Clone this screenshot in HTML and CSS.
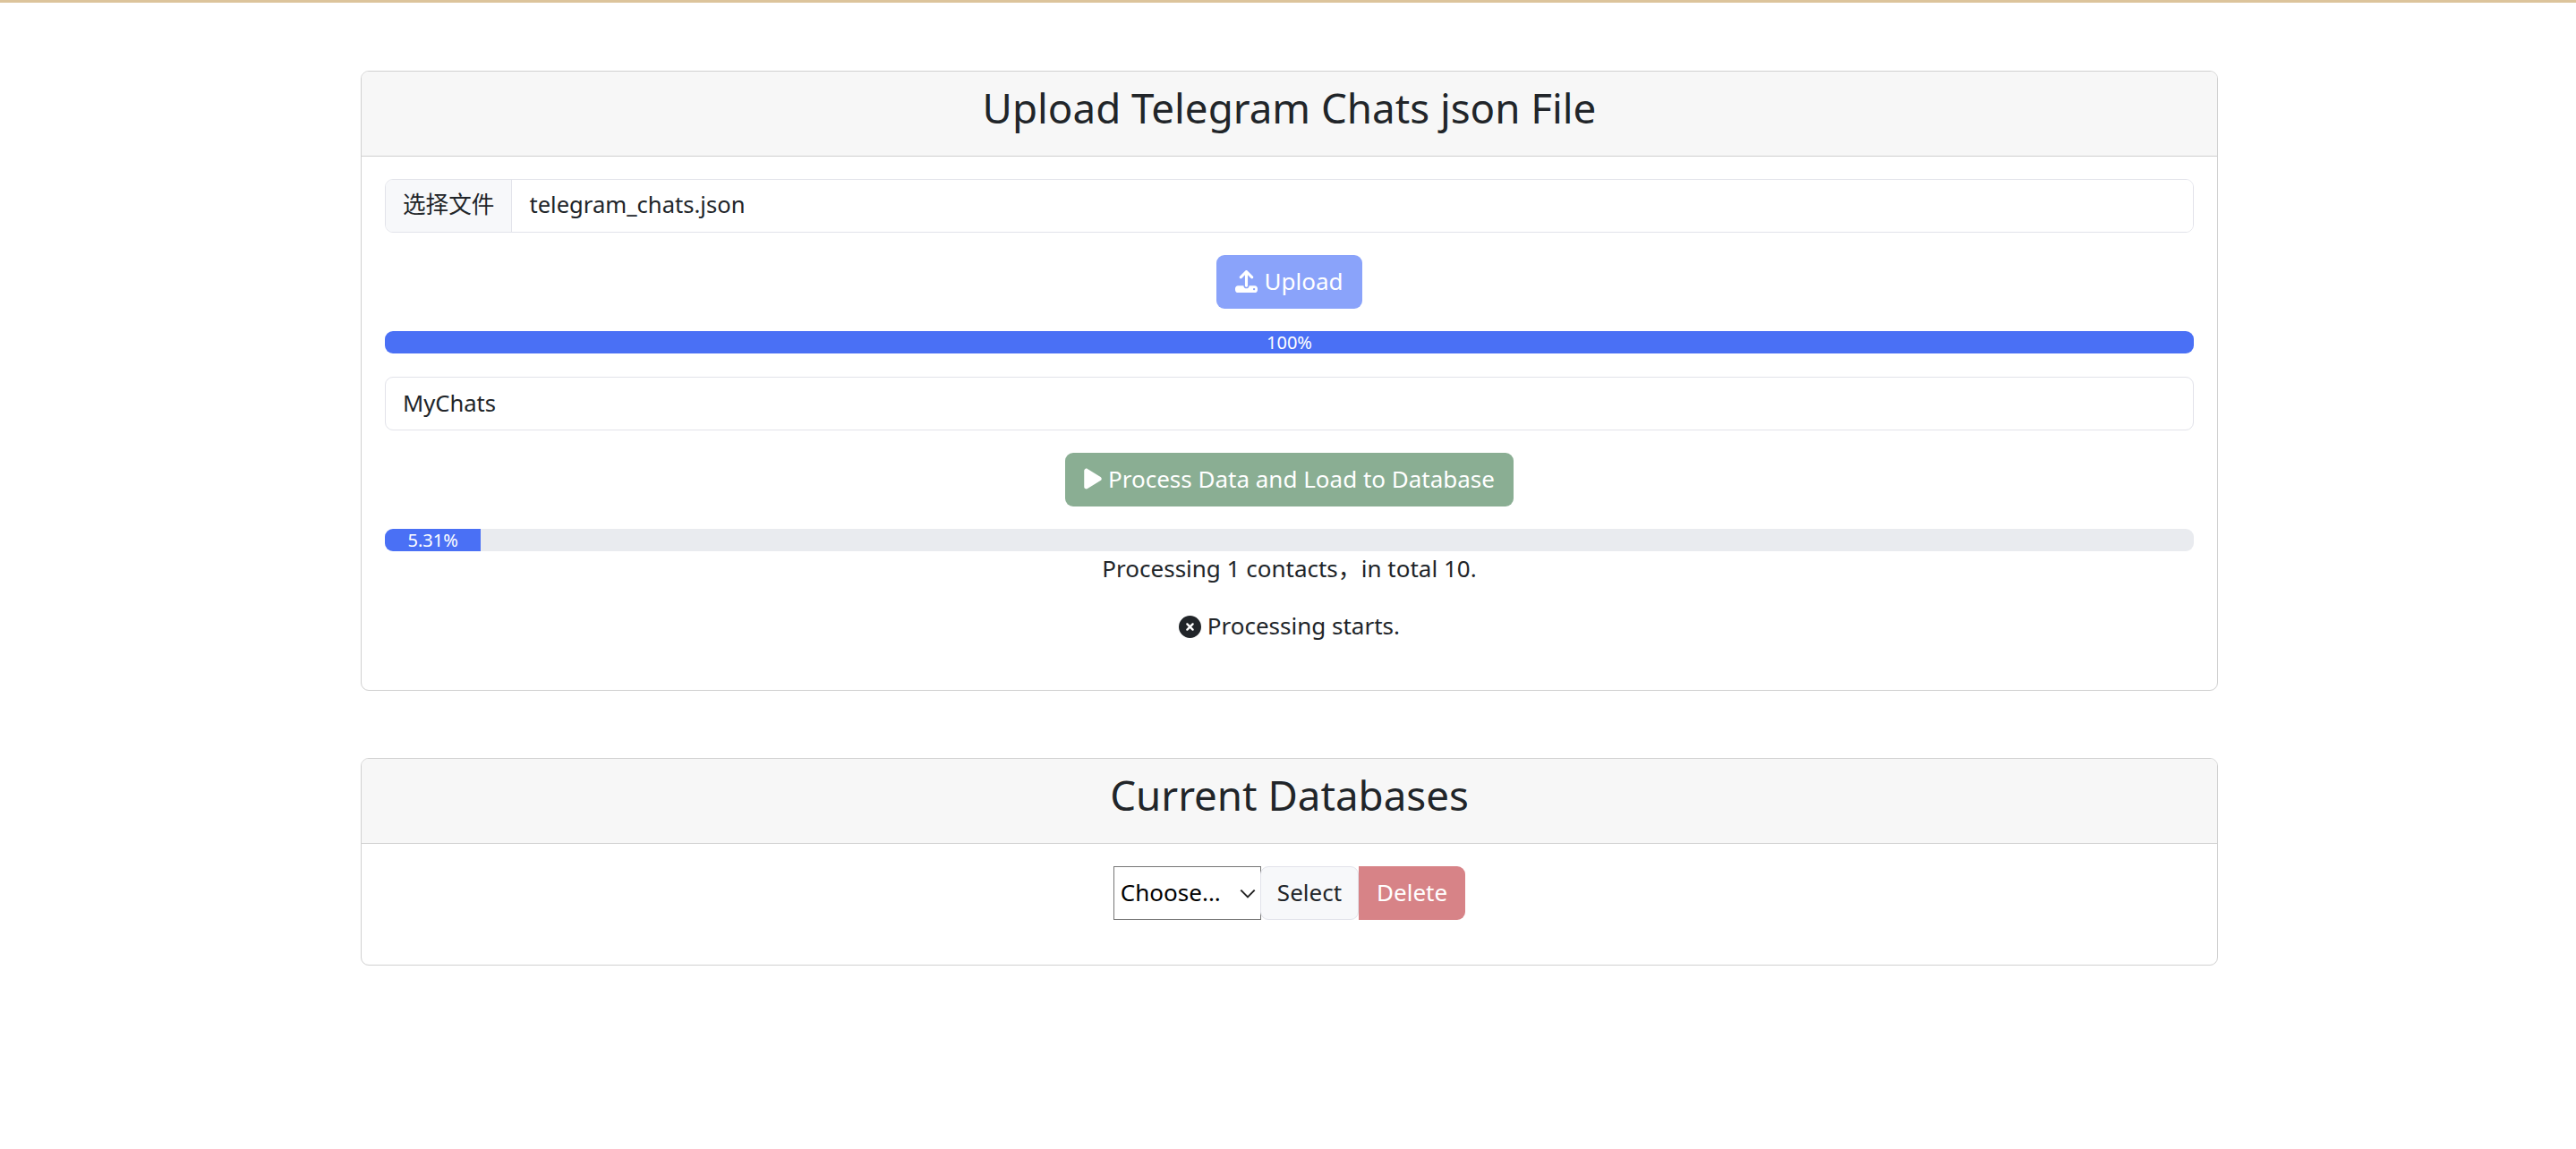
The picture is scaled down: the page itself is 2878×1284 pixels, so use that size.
FILE: index.html
```html
<!DOCTYPE html>
<html lang="en">
<head>
    <meta charset="utf-8" />
    <title>Upload Telegram Chats</title>
    <link rel="stylesheet" href="styles.css">
</head>
<body>
    <main class="page">
        <section class="card">
            <h3 class="card-header">Upload Telegram Chats json File</h3>
            <div class="card-body">
                <div class="input-group">
                    <span class="input-label">选择文件</span>
                    <input class="input-text" type="text" value="telegram_chats.json" readonly>
                </div>
                <div class="center">
                    <button class="btn btn-upload">
                        <svg class="icon" viewBox="0 0 512 512"><path d="M288 109.3V352c0 17.7-14.3 32-32 32s-32-14.3-32-32V109.3l-73.4 73.4c-12.5 12.5-32.8 12.5-45.3 0s-12.5-32.8 0-45.3l128-128c12.5-12.5 32.8-12.5 45.3 0l128 128c12.5 12.5 12.5 32.8 0 45.3s-32.8 12.5-45.3 0L288 109.3zM64 352h128c0 35.3 28.7 64 64 64s64-28.7 64-64h128c35.3 0 64 28.7 64 64v32c0 35.3-28.7 64-64 64H64c-35.3 0-64-28.7-64-64v-32c0-35.3 28.7-64 64-64zm368 104a24 24 0 1 0 0-48 24 24 0 1 0 0 48z"/></svg>
                        Upload
                    </button>
                </div>
                <div class="progress"><div class="progress-bar" style="width: 100%">100%</div></div>
                <input class="input-text input-single" type="text" value="MyChats" readonly>
                <div class="center">
                    <button class="btn btn-process">
                        <svg class="icon icon-play" viewBox="0 0 384 512"><path d="M73 39c-14.800-9.100-33.400-9.400-48.500-.9S0 62.600 0 80v352c0 17.400 9.400 33.400 24.500 41.900s33.700 8.100 48.500-.9l288-176c14.300-8.700 23-24.200 23-41s-8.700-32.200-23-41L73 39z"/></svg>
                        Process Data and Load to Database
                    </button>
                </div>
                <div class="progress progress-tight"><div class="progress-bar" style="width: 5.31%">5.31%</div></div>
                <p class="status">Processing 1 contacts，in total 10.</p>
                <p class="status status-last">
                    <svg class="icon icon-dark" viewBox="0 0 512 512"><path d="M256 512a256 256 0 1 0 0-512 256 256 0 1 0 0 512zm-81-337c9.400-9.400 24.600-9.400 33.900 0l47 47 47-47c9.400-9.400 24.600-9.400 33.900 0s9.400 24.600 0 33.900l-47 47 47 47c9.400 9.400 9.400 24.600 0 33.900s-24.600 9.400-33.900 0l-47-47-47 47c-9.400 9.400-24.600 9.400-33.900 0s-9.400-24.600 0-33.900l47-47-47-47c-9.400-9.400-9.400-24.600 0-33.900z"/></svg>
                    Processing starts.
                </p>
            </div>
        </section>

        <section class="card">
            <h3 class="card-header">Current Databases</h3>
            <div class="card-body db-body">
                <select class="db-select">
                    <option>Choose...</option>
                </select>
                <button class="btn btn-select">Select</button>
                <button class="btn btn-delete">Delete</button>
            </div>
        </section>
    </main>
</body>
</html>
```

FILE: styles.css
```css
/* Base */
body {
    margin: 0;
    padding-left: 3px;
    background-color: #fff;
    border-top: 3px solid #dcc49c;
    color: #212529;
    font-family: "Noto Sans", "Noto Sans CJK SC", sans-serif;
    font-size: 26px;
    line-height: 1.5;
}

.page {
    width: 2075px;
    margin: 0 auto;
    padding-top: 76px;
}

/* Cards */
.card {
    border: 1px solid #d0d0d0;
    border-radius: 9px;
    margin-bottom: 75px;
    overflow: hidden;
}

.card-header {
    margin: 0;
    padding: 3px 25px 17px;
    height: 74px;
    background-color: #f7f7f7;
    border-bottom: 1px solid #d0d0d0;
    font-size: 45.7px;
    font-weight: 400;
    line-height: 74px;
    text-align: center;
}

.card-body {
    padding: 25px 26px;
}

.center {
    display: flex;
    justify-content: center;
    margin: 25px 0;
}

/* Inputs */
.input-group {
    display: flex;
    height: 60px;
    box-sizing: border-box;
    border: 1px solid #e2e3ea;
    border-radius: 9px;
    overflow: hidden;
}

.input-label {
    display: flex;
    align-items: center;
    padding: 0 19px 2px;
    background-color: #f7f8fa;
    border-right: 1px solid #e2e3ea;
    font-size: 25.6px;
}

.input-text {
    flex: 1;
    min-width: 0;
    border: 0;
    padding: 0 19px 2px;
    color: #212529;
    font: inherit;
    font-size: 25.6px;
    outline: none;
}

.input-single {
    display: block;
    width: 100%;
    height: 60px;
    margin-top: 26px;
    box-sizing: border-box;
    border: 1px solid #e2e3ea;
    border-radius: 9px;
}

/* Buttons */
.btn {
    display: inline-flex;
    align-items: center;
    gap: 7px;
    height: 60px;
    box-sizing: border-box;
    padding: 0 19px 2px;
    border: 1px solid transparent;
    border-radius: 9px;
    color: #fff;
    font: inherit;
    cursor: pointer;
}

.btn-upload {
    padding: 0 20px 2px;
    background-color: #8aa3fa;
}

.btn-process {
    padding: 0 20px 2px;
    background-color: #8aae93;
}

.btn-select {
    padding: 0 18px 2px;
    background-color: #f7f8fa;
    border-color: #e2e3ea;
    color: #212529;
    margin-left: -1px;
}

.btn-delete {
    background-color: #d78387;
    border-radius: 0 9px 9px 0;
}

.icon {
    width: 25px;
    height: 25px;
    fill: #fff;
}

.icon-play {
    width: 20px;
    height: 26px;
}

.icon-dark {
    fill: #212529;
    vertical-align: -4px;
}

/* Progress */
.progress {
    height: 25px;
    background-color: #e9ebef;
    border-radius: 9px;
    overflow: hidden;
}

.progress-bar {
    height: 100%;
    background-color: #4a70f5;
    color: #fff;
    font-size: 20px;
    line-height: 25px;
    text-align: center;
}

/* Status text */
.status {
    margin: 0 0 25px;
    text-align: center;
}

.status-last {
    margin-bottom: 27px;
}

/* Database row */
.db-body {
    display: flex;
    justify-content: center;
    padding-bottom: 50px;
}

.db-select {
    appearance: none;
    width: 165px;
    height: 60px;
    box-sizing: border-box;
    border: 1px solid #767676;
    border-radius: 0;
    padding: 0 30px 2px 7px;
    background: #fff url("data:image/svg+xml,%3Csvg xmlns='http://www.w3.org/2000/svg' viewBox='0 0 16 10'%3E%3Cpath d='M1 1.500l7 7 7-7' fill='none' stroke='%23222' stroke-width='1.800'/%3E%3C/svg%3E") no-repeat right 5px center / 18px 11px;
    color: #000;
    font: inherit;
}
```
